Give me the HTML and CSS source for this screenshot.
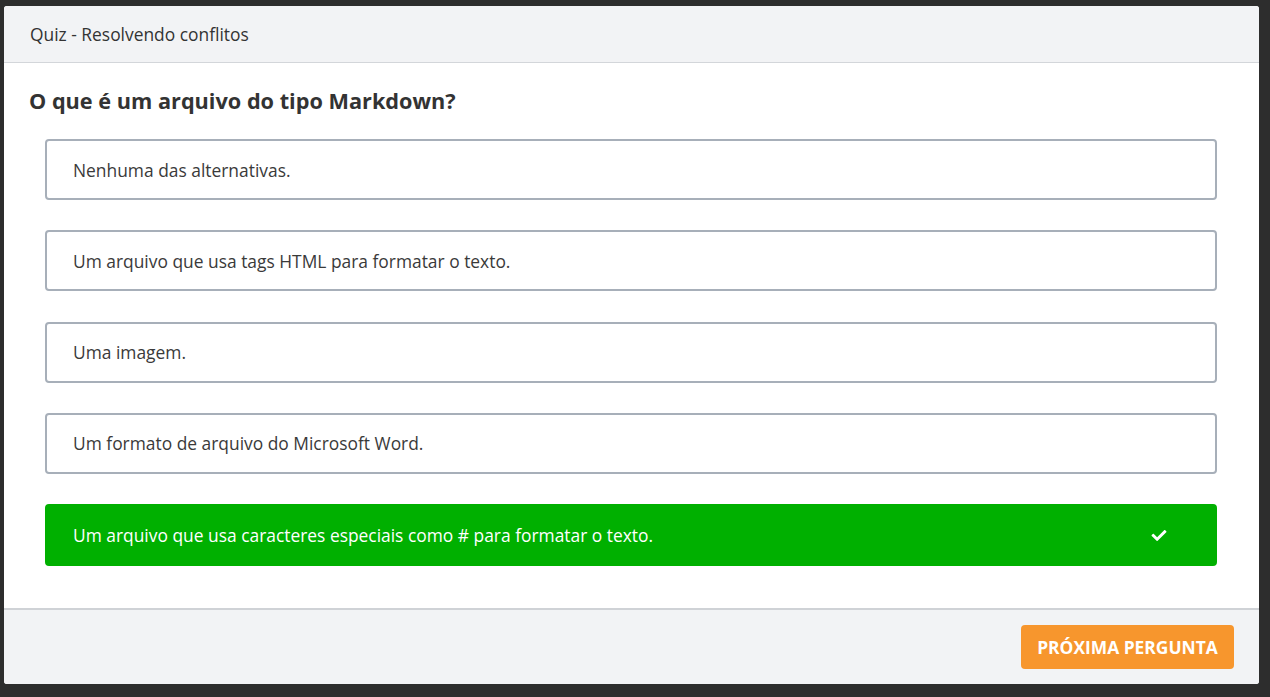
FILE: index.html
```html
<!DOCTYPE html>
<html lang="pt-BR">
<head>
<meta charset="utf-8">
<title>Quiz - Resolvendo conflitos</title>
<link rel="stylesheet" href="styles.css">
</head>
<body>
<div class="modal">
  <div class="modal-header">Quiz - Resolvendo conflitos</div>
  <div class="modal-body">
    <h2 class="question">O que é um arquivo do tipo Markdown?</h2>
    <ul class="options">
      <li class="option">Nenhuma das alternativas.</li>
      <li class="option">Um arquivo que usa tags HTML para formatar o texto.</li>
      <li class="option">Uma imagem.</li>
      <li class="option">Um formato de arquivo do Microsoft Word.</li>
      <li class="option correct">
        <span>Um arquivo que usa caracteres especiais como # para formatar o texto.</span>
        <svg class="check" viewBox="0 0 512 512" width="18" height="15"><path fill="#fff" d="M173.9 439.4L7.5 273c-10-10-10-26.2 0-36.2l36.2-36.2c10-10 26.2-10 36.2 0L192 312.7 432.1 72.6c10-10 26.2-10 36.2 0l36.2 36.2c10 10 10 26.2 0 36.2L210.1 439.4c-10 10-26.2 10-36.2 0z"/></svg>
      </li>
    </ul>
  </div>
  <div class="modal-footer">
    <button class="next-btn">PRÓXIMA PERGUNTA</button>
  </div>
</div>
</body>
</html>
```

FILE: styles.css
```css
html, body {
  margin: 0;
  padding: 0;
  background: #2d2d2d;
  height: 697px;
  overflow: hidden;
}
body {
  font-family: "Open Sans", "Liberation Sans", sans-serif;
  color: #333;
}
.modal {
  margin: 6px 0 0 4px;
  width: 1255px;
  height: 678px;
  background: #fff;
  border-radius: 3px;
  display: flex;
  flex-direction: column;
  overflow: hidden;
}
.modal-header {
  height: 57px;
  box-sizing: border-box;
  background: #f2f3f5;
  border-bottom: 1px solid #d3d6da;
  padding: 0 26px;
  display: flex;
  align-items: center;
  font-size: 17.4px;
  color: #333;
}
.modal-body {
  flex: 1;
  padding: 0 42px 0 41px;
}
.question {
  margin: 24px 0 0 -16px;
  font-size: 21.7px;
  font-weight: 700;
  line-height: 28px;
  color: #333;
}
.options {
  list-style: none;
  margin: 24px 0 0;
  padding: 0;
  display: flex;
  flex-direction: column;
  gap: 30.3px;
}
.option {
  height: 61px;
  box-sizing: border-box;
  border: 2px solid #a7afb9;
  border-radius: 4px;
  padding: 0 26px;
  display: flex;
  align-items: center;
  font-size: 17.4px;
  color: #3a3a3a;
}
.option.correct {
  height: 62px;
  background: #00b000;
  border-color: #00b000;
  color: #fff;
  justify-content: space-between;
  padding-right: 47px;
}
.check {
  display: block;
}
.modal-footer {
  height: 76px;
  box-sizing: border-box;
  background: #f2f3f5;
  border-top: 2px solid #cfd2d6;
  display: flex;
  justify-content: flex-end;
  align-items: center;
  padding: 0 25px 0 0;
}
.next-btn {
  width: 213px;
  height: 44px;
  background: #f7962d;
  border: none;
  border-radius: 4px;
  color: #fff;
  font-family: "Open Sans", "Liberation Sans", sans-serif;
  font-weight: 700;
  font-size: 17.4px;
  padding: 0;
  cursor: pointer;
}
```
